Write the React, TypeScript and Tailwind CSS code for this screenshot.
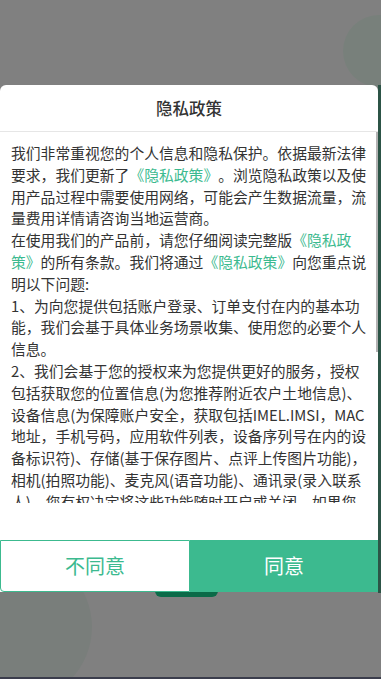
// App.tsx - Diálogo de política de privacidad sobre una capa gris.
const GREEN = "text-[#3cba8f]";

function Link({ children }: { children: React.ReactNode }) {
  return <span className={GREEN}>{children}</span>;
}

export default function App() {
  return (
    <div
      className="relative h-[679px] w-[381px] overflow-hidden bg-[#808080] [text-spacing-trim:space-all]"
      style={{ fontFamily: '"Noto Sans CJK SC", "Noto Sans", sans-serif' }}
    >
      {/* elementos de fondo vistos a través de la capa */}
      <div className="absolute left-[343px] top-[15px] h-[72px] w-[72px] rounded-full bg-[#78807b]" />
      <div className="absolute -left-[60px] top-[552px] h-[150px] w-[152px] rounded-full bg-[#797e7b]" />
      <div className="absolute left-[155px] top-[588px] h-[9px] w-[63px] rounded-b-[6px] bg-[#0b6a48]" />
      <div className="absolute right-0 top-[85px] h-[508px] w-[3px] bg-[#2c5446]" />
      <div className="absolute bottom-0 left-0 h-[2px] w-full bg-[#3b3d4c]" />

      <div className="relative pt-[85px]">
        <section className="relative flex w-[378px] flex-col rounded-t-[6px] bg-white">
          <header className="flex h-[47px] items-center justify-center border-b border-[#e6e6e6]">
            <h1 className="text-[16.5px] font-medium text-[#333]">隐私政策</h1>
          </header>
          <div className="relative h-[371px] overflow-hidden">
            <div className="px-[11px] pt-[10px] text-[14.8px] leading-[21.8px] text-[#333] break-all">
              <p>
                我们非常重视您的个人信息和隐私保护。依据最新法律要求，我们更新了<Link>《隐私政策》</Link>。浏览隐私政策以及使用产品过程中需要使用网络，可能会产生数据流量，流量费用详情请咨询当地运营商。
              </p>
              <p>
                在使用我们的产品前，请您仔细阅读完整版<Link>《隐私政策》</Link>的所有条款。我们将通过<Link>《隐私政策》</Link>向您重点说明以下问题:
              </p>
              <p>1、为向您提供包括账户登录、订单支付在内的基本功能，我们会基于具体业务场景收集、使用您的必要个人信息。</p>
              <p>
                2、我们会基于您的授权来为您提供更好的服务，授权包括获取您的位置信息(为您推荐附近农户土地信息)、设备信息(为保障账户安全，获取包括IMEL.IMSI，MAC地址，手机号码，应用软件列表，设备序列号在内的设备标识符)、存储(基于保存图片、点评上传图片功能)，相机(拍照功能)、麦克风(语音功能)、通讯录(录入联系人)，您有权决定将这些功能随时开启或关闭，如果您拒绝授权，我们将无法为您提供相关服务。
              </p>
            </div>
            <div className="absolute right-0 top-0 h-[220px] w-[2px] bg-[#b3b3b3]" />
          </div>
          <div className="h-[37px]" />
          <div className="flex h-[52px]">
            <button
              type="button"
              className="flex w-[190px] items-center justify-center rounded-bl-[4px] border border-[#3cba8f] bg-white text-[20px] text-[#3cba8f]"
            >
              不同意
            </button>
            <button type="button" className="flex flex-1 items-center justify-center bg-[#3cba8f] text-[20px] text-white">
              同意
            </button>
          </div>
        </section>
      </div>
    </div>
  );
}
